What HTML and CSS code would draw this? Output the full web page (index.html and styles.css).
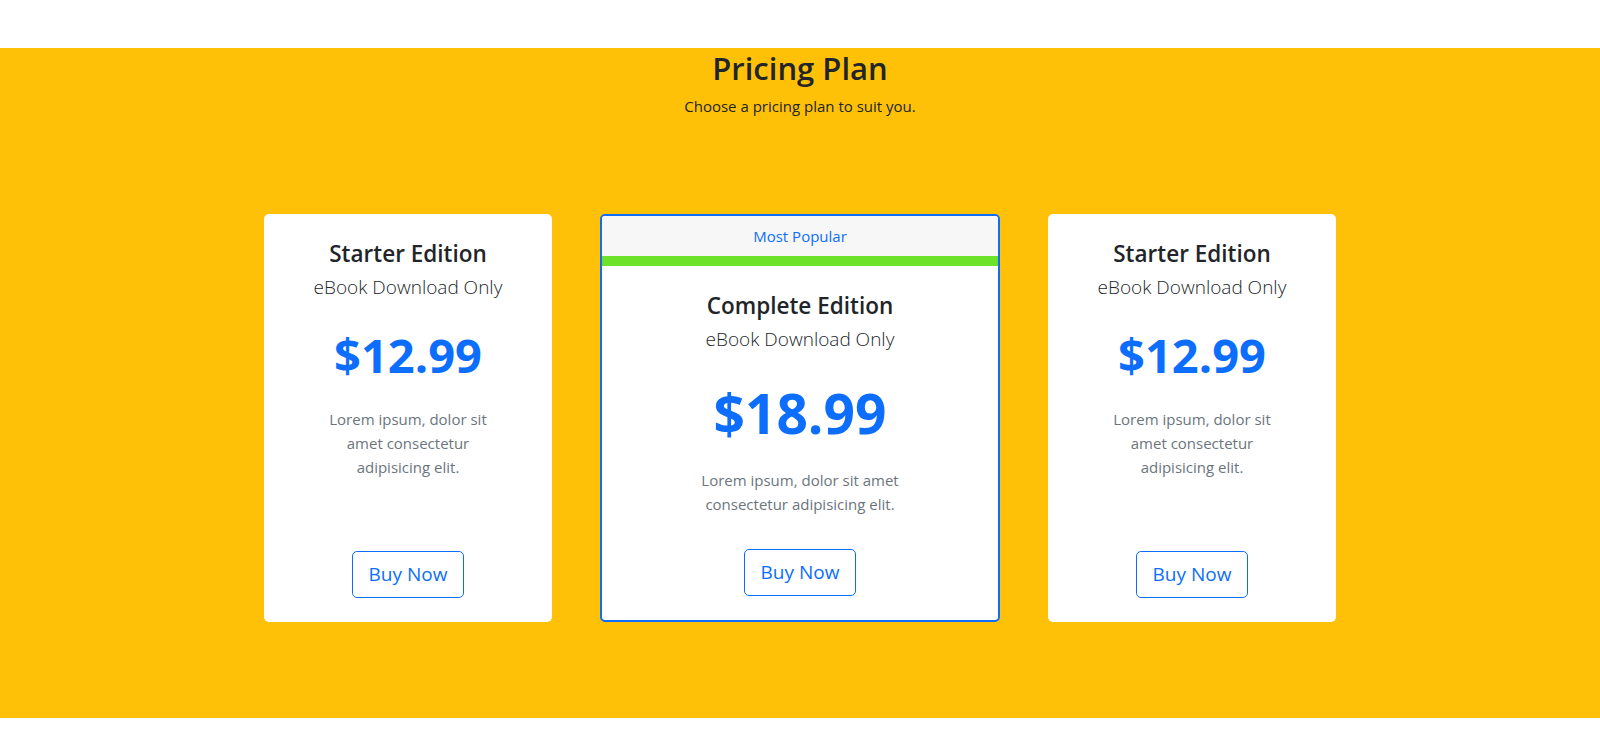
FILE: index.html
```html
<!DOCTYPE html>
<html lang="en">
<head>
<meta charset="utf-8">
<title>Pricing Plan</title>
<link rel="stylesheet" href="styles.css">
</head>
<body>
<div class="topbar"></div>
<section class="pricing">
  <h2 class="pricing-title">Pricing Plan</h2>
  <p class="pricing-sub">Choose a pricing plan to suit you.</p>
  <div class="plans">
    <div class="plan">
      <div class="plan-body">
        <h3 class="plan-title">Starter Edition</h3>
        <p class="plan-lead">eBook Download Only</p>
        <div class="plan-price">$12.99</div>
        <p class="plan-text">Lorem ipsum, dolor sit amet consectetur adipisicing elit.</p>
        <a class="btn-buy" href="#">Buy Now</a>
      </div>
    </div>
    <div class="plan plan-featured">
      <div class="plan-header">Most Popular</div>
      <div class="plan-stripe"></div>
      <div class="plan-body">
        <h3 class="plan-title">Complete Edition</h3>
        <p class="plan-lead">eBook Download Only</p>
        <div class="plan-price">$18.99</div>
        <p class="plan-text">Lorem ipsum, dolor sit amet consectetur adipisicing elit.</p>
        <a class="btn-buy" href="#">Buy Now</a>
      </div>
    </div>
    <div class="plan">
      <div class="plan-body">
        <h3 class="plan-title">Starter Edition</h3>
        <p class="plan-lead">eBook Download Only</p>
        <div class="plan-price">$12.99</div>
        <p class="plan-text">Lorem ipsum, dolor sit amet consectetur adipisicing elit.</p>
        <a class="btn-buy" href="#">Buy Now</a>
      </div>
    </div>
  </div>
</section>
</body>
</html>
```

FILE: styles.css
```css
* { box-sizing: border-box; }

html, body {
  margin: 0;
  padding: 0;
  background: #ffffff;
  color: #212529;
  font-family: "Open Sans", "Noto Sans", sans-serif;
}

.topbar {
  height: 48px;
}

.pricing {
  background: #ffc107;
  padding: 0 0 96px;
  text-align: center;
}

.pricing-title {
  margin: 0;
  padding-top: 2px;
  font-size: 31px;
  font-weight: 600;
  line-height: 1.2;
  color: #212529;
}

.pricing-sub {
  margin: 7px 0 0;
  font-size: 15px;
  line-height: 24px;
  color: #212529;
}

.plans {
  display: flex;
  justify-content: center;
  align-items: stretch;
  gap: 48px;
  margin-top: 96px;
}

.plan {
  width: 288px;
  background: #ffffff;
  border-radius: 5px;
  display: flex;
  flex-direction: column;
}

.plan-featured {
  width: 400px;
  border: 2px solid #0d6efd;
  border-radius: 5px;
  overflow: hidden;
}

.plan-header {
  height: 40px;
  background: #f7f7f7;
  color: #0d6efd;
  font-size: 15px;
  line-height: 40px;
}

.plan-stripe {
  height: 10px;
  background: #6ce32a;
}

.plan-body {
  flex: 1;
  display: flex;
  flex-direction: column;
  align-items: center;
  padding: 26px 24px 24px;
}

.plan-title {
  margin: 0;
  font-size: 22.5px;
  font-weight: 600;
  line-height: 1.2;
  color: #212529;
}

.plan-lead {
  margin: 6px 0 0;
  font-size: 19px;
  font-weight: 300;
  line-height: 28px;
  color: #212529;
}

.plan-price {
  margin-top: 26px;
  font-size: 47px;
  font-weight: 700;
  line-height: 1.2;
  color: #0d6efd;
}

.plan-featured .plan-price {
  font-size: 55px;
  margin-top: 27px;
}

.plan-text {
  margin: 23px 0 0;
  max-width: 175px;
  font-size: 15px;
  line-height: 24px;
  color: #6c757d;
}

.plan-featured .plan-text {
  max-width: 240px;
  margin-top: 22px;
}

.btn-buy {
  margin-top: auto;
  display: inline-block;
  padding: 8px 16px;
  font-size: 19px;
  line-height: 29px;
  color: #0d6efd;
  border: 1px solid #0d6efd;
  border-radius: 5px;
  text-decoration: none;
}

.plan-featured .btn-buy {
  margin-top: 33px;
}
```
